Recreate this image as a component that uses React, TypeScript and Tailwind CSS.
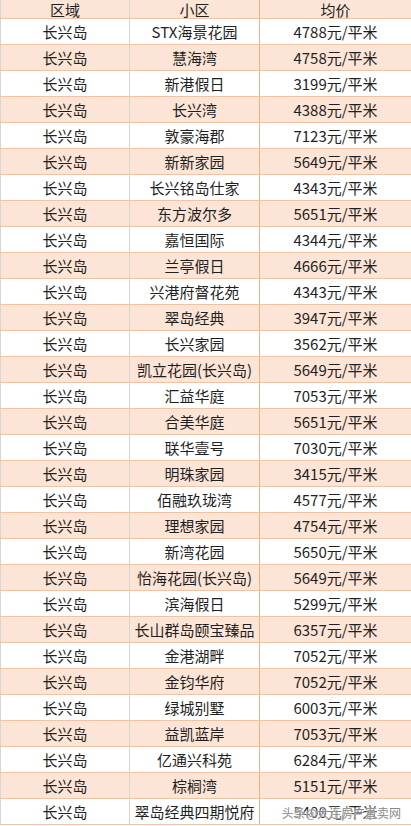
const rows: [string, string][] = [
  ['STX海景花园', '4788'],
  ['慧海湾', '4758'],
  ['新港假日', '3199'],
  ['长兴湾', '4388'],
  ['敦豪海郡', '7123'],
  ['新新家园', '5649'],
  ['长兴铭岛仕家', '4343'],
  ['东方波尔多', '5651'],
  ['嘉恒国际', '4344'],
  ['兰亭假日', '4666'],
  ['兴港府督花苑', '4343'],
  ['翠岛经典', '3947'],
  ['长兴家园', '3562'],
  ['凯立花园(长兴岛)', '5649'],
  ['汇益华庭', '7053'],
  ['合美华庭', '5651'],
  ['联华壹号', '7030'],
  ['明珠家园', '3415'],
  ['佰融玖珑湾', '4577'],
  ['理想家园', '4754'],
  ['新湾花园', '5650'],
  ['怡海花园(长兴岛)', '5649'],
  ['滨海假日', '5299'],
  ['长山群岛颐宝臻品', '6357'],
  ['金港湖畔', '7052'],
  ['金钧华府', '7052'],
  ['绿城别墅', '6003'],
  ['益凯蓝岸', '7053'],
  ['亿通兴科苑', '6284'],
  ['棕榈湾', '5151'],
  ['翠岛经典四期悦府', '5400'],
];

const Row = ({ cells, header, shaded }: { cells: string[]; header?: boolean; shaded?: boolean }) => (
  <div
    className={`grid grid-cols-[130px_130px_1fr] border-b border-[#f1c3a5] ${
      header ? 'h-[19px]' : 'h-[26px]'
    } ${shaded ? 'bg-[#fce4d6]' : 'bg-white'}`}
  >
    <div className="flex items-center justify-center border-l border-r border-[#d6d6d6]">{cells[0]}</div>
    <div className="flex items-center justify-center border-r border-[#ecb18e]">{cells[1]}</div>
    <div className="flex items-center justify-center">{cells[2]}</div>
  </div>
);

export default function App() {
  return (
    <div
      className="relative w-[411px] h-[826px] overflow-hidden bg-white text-[15px] leading-none text-[#1f1f1f]"
      style={{ fontFamily: '"Noto Sans CJK SC", "Noto Sans", sans-serif' }}
    >
      <Row cells={['区域', '小区', '均价']} header shaded />
      {rows.map(([name, price], i) => (
        <Row key={name} cells={['长兴岛', name, `${price}元/平米`]} shaded={i % 2 === 1} />
      ))}
      {/* watermark */}
      <div className="absolute right-[10px] bottom-[7px] text-[12px] text-[#8a8a8a] [text-shadow:0_0_2px_#fff,0_0_2px_#fff]">
        头条@大连房产直卖网
      </div>
    </div>
  );
}
